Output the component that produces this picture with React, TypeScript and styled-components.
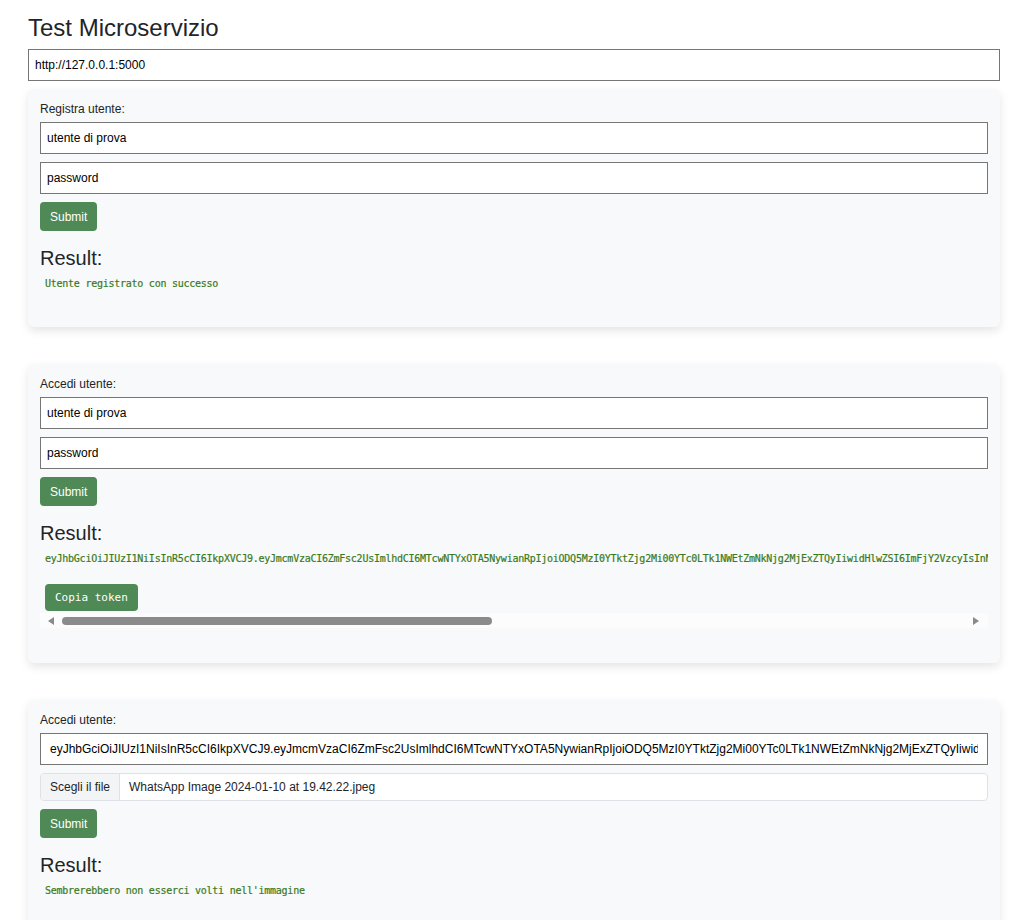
import React from "react";
import styled, { createGlobalStyle } from "styled-components";

const GlobalStyle = createGlobalStyle`
  html, body { margin: 0; padding: 0; background: #ffffff; }
  body {
    font-family: "Liberation Sans", Arial, sans-serif;
    font-size: 12px;
    color: #212529;
  }
  * { box-sizing: border-box; }
`;

const Page = styled.div`
  padding: 14px 18px 40px 28px;
`;

const Title = styled.h1`
  margin: 0 0 7px;
  font-size: 24px;
  line-height: 28px;
  font-weight: 400;
  color: #212529;
`;

const BaseInput = styled.input`
  display: block;
  width: 100%;
  height: 32px;
  border: 1px solid #767676;
  border-radius: 0;
  background: #ffffff;
  font-family: "Liberation Sans", Arial, sans-serif;
  font-size: 12px;
  color: #000000;
  outline: none;
`;

const UrlInput = styled(BaseInput)`
  padding: 0 6px;
  margin-bottom: 8px;
`;

const Card = styled.section`
  background: #f8f9fa;
  border-radius: 6px;
  box-shadow: 0 4px 10px rgba(0, 0, 0, 0.1);
  padding: 13px 12px 12px;
  margin-bottom: 37px;
`;

const FieldLabel = styled.label`
  display: block;
  line-height: 14px;
  margin-bottom: 6px;
  color: #212529;
`;

const TextInput = styled(BaseInput)<{ $wide?: boolean }>`
  padding: 0 ${(p) => (p.$wide ? "9px" : "6px")};
  margin-bottom: 8px;
`;

const FileField = styled.label`
  display: flex;
  align-items: stretch;
  height: 28px;
  border: 1px solid #dee2e6;
  border-radius: 4px;
  background: #ffffff;
  overflow: hidden;
  margin-bottom: 8px;
  color: #212529;
`;

const FileButton = styled.span`
  display: flex;
  align-items: center;
  padding: 0 9px;
  background: #f3f4f5;
  border-right: 1px solid #dee2e6;
`;

const FileName = styled.span`
  display: flex;
  align-items: center;
  padding: 0 9px;
`;

const SubmitButton = styled.button`
  display: block;
  height: 29px;
  padding: 0 10px;
  border: none;
  border-radius: 4px;
  background: #4e8956;
  color: #ffffff;
  font-family: "Liberation Sans", Arial, sans-serif;
  font-size: 12px;
  cursor: pointer;
`;

const ResultTitle = styled.h2`
  margin: 16px 0 8px;
  font-size: 20px;
  line-height: 23px;
  font-weight: 400;
  color: #212529;
`;

const ResultArea = styled.div`
  margin-bottom: 23px;
`;

const ResultBox = styled.div`
  overflow: hidden;
  padding: 0 5px 2px;
  font-family: "DejaVu Sans Mono", "Liberation Mono", monospace;
  font-size: 10px;
  letter-spacing: -0.25px;
  line-height: 12px;
  color: #3b7a1c;
  -webkit-text-stroke: 0.2px #3b7a1c;
`;

const ResultText = styled.div`
  white-space: pre;
`;

const CopyButton = styled.button`
  display: block;
  margin-top: 19px;
  height: 27px;
  padding: 0 10px;
  border: none;
  border-radius: 4px;
  background: #4e8956;
  color: #ffffff;
  font-family: "DejaVu Sans Mono", "Liberation Mono", monospace;
  font-size: 11px;
  -webkit-text-stroke: 0;
  cursor: pointer;
`;

const Scrollbar = styled.div`
  display: flex;
  align-items: center;
  gap: 8px;
  height: 15px;
  padding: 0 9px 0 8px;
  background: #fcfcfd;
`;

const ScrollArrow = styled.svg`
  flex: none;
  display: block;
`;

const ScrollTrack = styled.div`
  flex: 1;
  display: flex;
  align-items: center;
`;

const ScrollThumb = styled.div`
  height: 8px;
  border-radius: 4px;
  background: #8b8b8b;
`;

const toB64Url = (s: string) =>
  btoa(s).replace(/=+$/, "").replace(/\+/g, "-").replace(/\//g, "_");

const HEADER = "eyJhbGciOiJIUzI1NiIsInR5cCI6IkpXVCJ9";
const PAYLOAD = toB64Url(
  JSON.stringify({
    fresh: false,
    iat: 1705619097,
    jti: "849324a9-f862-4a74-955a-fcd686211e42",
    type: "access",
    sub: "utente di prova",
    nbf: 1705619097,
    csrf: "5b1e0c3a-7d2f-4a8e-9c61-2f4b8d7e3a90",
    exp: 1705619997,
  })
);
const SIGNATURE = "Qm8c3dK7pXr2vL9sT4wZ1nB6yH0fJ5aE8uG2iO7kR3M";
const TOKEN = `${HEADER}.${PAYLOAD}.${SIGNATURE}`;

function HorizontalScrollbar({ ratio }: { ratio: number }) {
  return (
    <Scrollbar>
      <ScrollArrow width="6" height="8" viewBox="0 0 6 8">
        <polygon points="6,0 6,8 0,4" fill="#8a8a8a" />
      </ScrollArrow>
      <ScrollTrack>
        <ScrollThumb style={{ width: `${ratio * 100}%` }} />
      </ScrollTrack>
      <ScrollArrow width="6" height="8" viewBox="0 0 6 8">
        <polygon points="0,0 0,8 6,4" fill="#8a8a8a" />
      </ScrollArrow>
    </Scrollbar>
  );
}

export default function App() {
  return (
    <>
      <GlobalStyle />
      <Page>
        <Title>Test Microservizio</Title>
        <UrlInput type="text" defaultValue="http://127.0.0.1:5000" />

        <Card>
          <FieldLabel>Registra utente:</FieldLabel>
          <TextInput type="text" defaultValue="utente di prova" />
          <TextInput type="text" defaultValue="password" />
          <SubmitButton type="button">Submit</SubmitButton>
          <ResultTitle>Result:</ResultTitle>
          <ResultArea>
            <ResultBox>
              <ResultText>Utente registrato con successo</ResultText>
            </ResultBox>
          </ResultArea>
        </Card>

        <Card>
          <FieldLabel>Accedi utente:</FieldLabel>
          <TextInput type="text" defaultValue="utente di prova" />
          <TextInput type="text" defaultValue="password" />
          <SubmitButton type="button">Submit</SubmitButton>
          <ResultTitle>Result:</ResultTitle>
          <ResultArea>
            <ResultBox>
              <ResultText>{TOKEN}</ResultText>
              <CopyButton type="button">Copia token</CopyButton>
            </ResultBox>
            <HorizontalScrollbar ratio={0.476} />
          </ResultArea>
        </Card>

        <Card>
          <FieldLabel>Accedi utente:</FieldLabel>
          <TextInput type="text" $wide defaultValue={TOKEN} />
          <FileField>
            <FileButton>Scegli il file</FileButton>
            <FileName>WhatsApp Image 2024-01-10 at 19.42.22.jpeg</FileName>
          </FileField>
          <SubmitButton type="button">Submit</SubmitButton>
          <ResultTitle>Result:</ResultTitle>
          <ResultArea>
            <ResultBox>
              <ResultText>Sembrerebbero non esserci volti nell'immagine</ResultText>
            </ResultBox>
          </ResultArea>
        </Card>
      </Page>
    </>
  );
}
